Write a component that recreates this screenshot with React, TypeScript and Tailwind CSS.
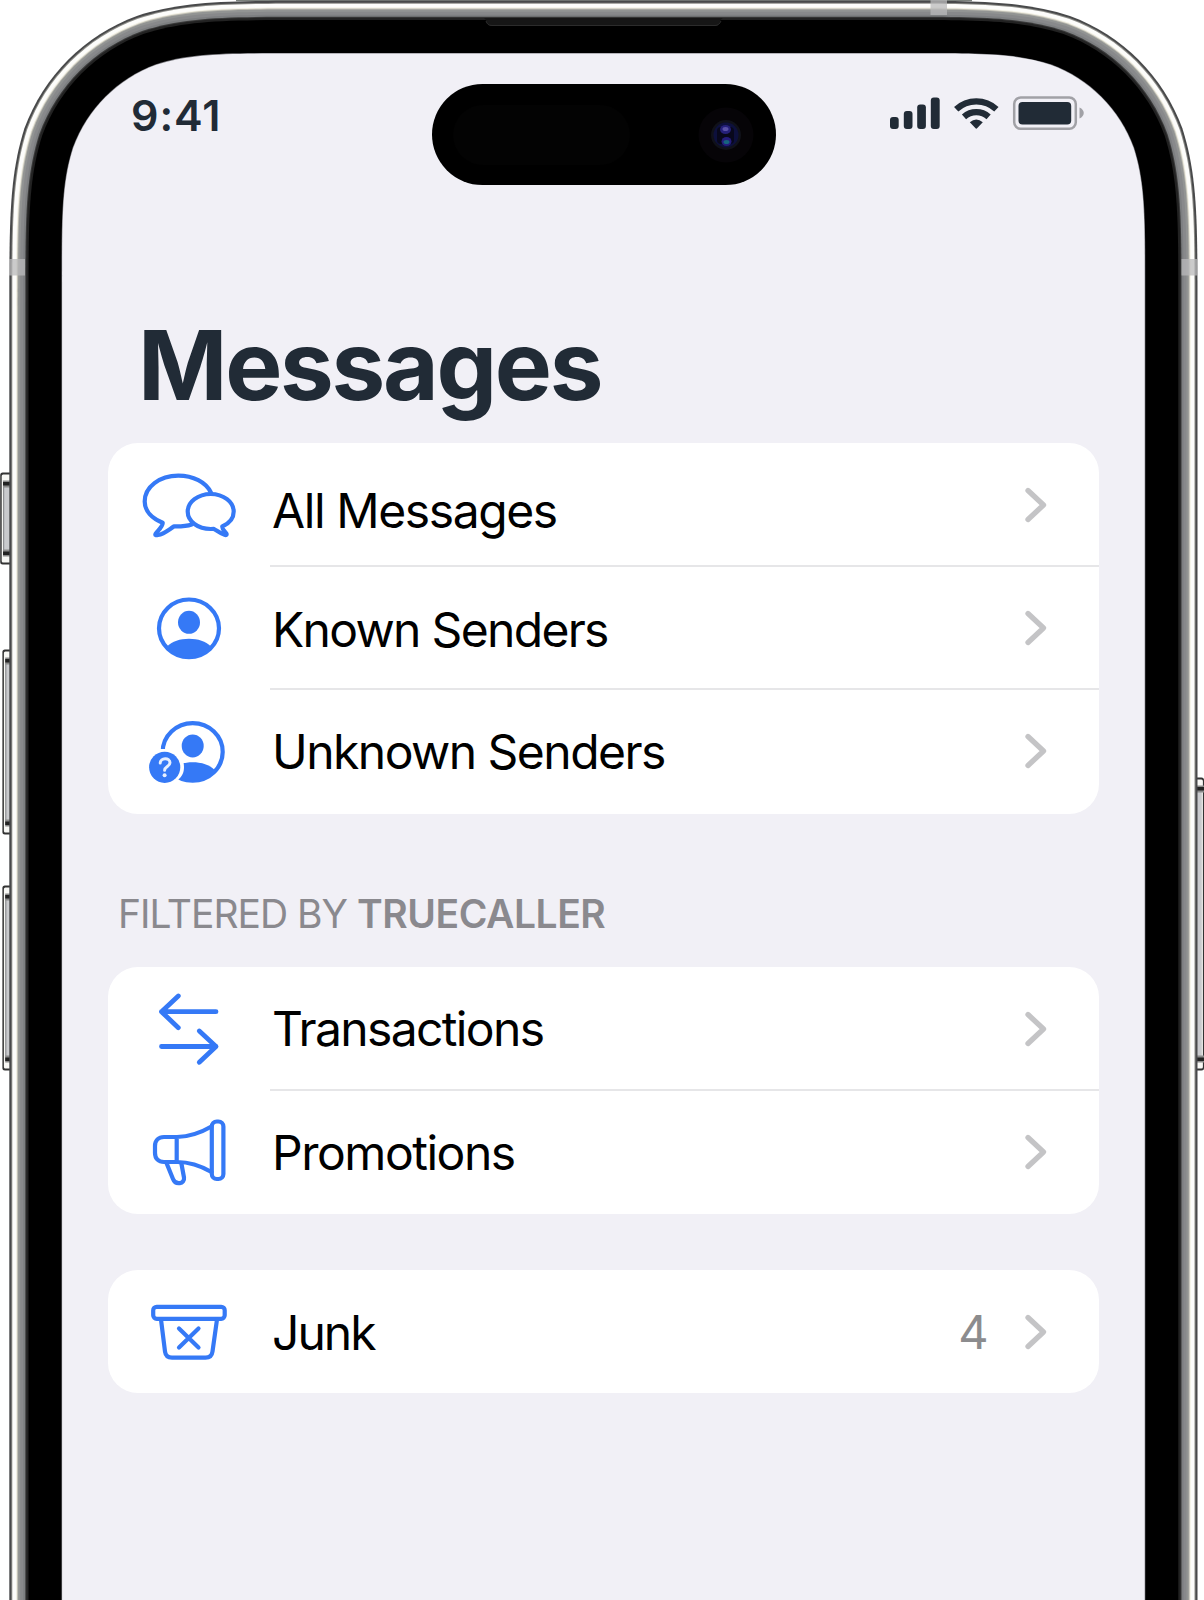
import type { ReactNode } from "react";

const BLUE = "#3579f6";

// Continuous-curvature rounded outline of the phone, inset by d from its outer edge.
function shellPath(d: number): string {
  const l = 9.3 + d;
  const t = 0.8 + d;
  const r = 1197.5 - d;
  const k = 202 - d;
  const a = 1.52866 * k;
  const b = 1.08849 * k;
  const c = 0.86841 * k;
  const e = 0.63149 * k;
  const f = 0.07491 * k;
  const g = 0.37282 * k;
  const h = 0.16906 * k;
  return [
    `M${l} 1620 V${t + a}`,
    `C${l} ${t + b} ${l} ${t + c} ${l + f} ${t + e}`,
    `C${l + h} ${t + g} ${l + g} ${t + h} ${l + e} ${t + f}`,
    `C${l + c} ${t} ${l + b} ${t} ${l + a} ${t}`,
    `H${r - a}`,
    `C${r - b} ${t} ${r - c} ${t} ${r - e} ${t + f}`,
    `C${r - g} ${t + h} ${r - h} ${t + g} ${r - f} ${t + e}`,
    `C${r} ${t + c} ${r} ${t + b} ${r} ${t + a}`,
    "V1620 Z",
  ].join(" ");
}

const SHELL_LAYERS: [number, string][] = [
  [0, "#48494a"],
  [2, "#8c8c88"],
  [3, "#fdfdfb"],
  [6.8, "#f1efe3"],
  [7.8, "#bdbcb2"],
  [8.8, "#929493"],
  [11, "#88898b"],
  [14, "#7d7f81"],
  [16, "#3a3a3a"],
  [17, "#222222"],
  [19.2, "#000000"],
  [52.2, "#77777c"],
  [52.8, "#f1f0f6"],
];

function SideButton({ x, y, w, h }: { x: number; y: number; w: number; h: number }) {
  return (
    <g>
      <rect x={x} y={y} width={w} height={h} rx={2.5} fill="#333" />
      <rect x={x + 1.5} y={y + 2} width={w - 2.6} height={h - 4} rx={1.5} fill="#f8f8f5" />
      <rect x={x + 2.8} y={y + 9} width={w - 5} height={h - 18} fill="#c9cacd" />
      <rect x={x + 2.8} y={y + 13} width={1.2} height={h - 26} fill="#8e8f92" />
      <rect x={x + 2.8} y={y + 8} width={w - 2.8} height={7} fill="#8a8a8a" />
      <rect x={x + 2.8} y={y + h - 15} width={w - 2.8} height={7} fill="#8a8a8a" />
      <rect x={x + 2.8} y={y + 9.5} width={w - 2.8} height={3.5} fill="#222" />
      <rect x={x + 2.8} y={y + h - 13} width={w - 2.8} height={3.5} fill="#222" />
    </g>
  );
}

function PhoneShell() {
  return (
    <svg className="absolute inset-0" width="1204" height="1600" viewBox="0 0 1204 1600">
      <SideButton x={0.2} y={472.5} w={13} h={92} />
      <SideButton x={2.4} y={649.5} w={11} h={185} />
      <SideButton x={2.4} y={885.5} w={11} h={185} />
      <SideButton x={1193} y={777.5} w={11} h={293} />
      <rect x="236" y="0" width="736" height="1.200" fill="#7b817c" />
      {SHELL_LAYERS.map(([d, fill]) => (
        <path key={d} d={shellPath(d)} fill={fill} />
      ))}
      <path d="M484 18 C487 19 486 26 492 26 H715 C721 26 719 19 723 18 Z" fill="#161616" />
      <path d="M486 21 C487 24 488.500 25.500 492 25.500 H715 C718 25.500 719.500 24 721 21" fill="none" stroke="#2c2c2c" strokeWidth="1" />
      <rect x="930.500" y="0" width="16.500" height="15" fill="#b9b9bb" opacity="0.75" />
      <rect x="9" y="259" width="16" height="16.500" fill="#b9b9bb" opacity="0.75" />
      <rect x="1181.500" y="259" width="16.500" height="16.500" fill="#b9b9bb" opacity="0.75" />
    </svg>
  );
}

function DynamicIsland() {
  return (
    <div className="mt-[84px] flex h-[101px] w-[344px] items-center justify-between rounded-full bg-black pr-[22px] pl-[21px]">
      <div className="h-[60px] w-[177px] rounded-full bg-[#030303]" />
      <svg width="56" height="56" viewBox="0 0 56 56">
        <circle cx="28" cy="28" r="27.500" fill="#060407" />
        <circle cx="28" cy="28" r="15" fill="#101119" />
        <circle cx="28" cy="28" r="12.500" fill="#0d103c" />
        <rect x="19" y="20" width="17" height="17" rx="4" fill="#08081c" />
        <ellipse cx="27.500" cy="22.500" rx="5.500" ry="4.500" fill="#25207a" />
        <ellipse cx="27.500" cy="22" rx="3" ry="2" fill="#5a52a8" />
        <ellipse cx="28.500" cy="34.500" rx="5" ry="4.500" fill="#241c7c" />
        <ellipse cx="28.500" cy="35" rx="3" ry="2" fill="#16647e" />
      </svg>
    </div>
  );
}

function StatusIcons() {
  return (
    <svg className="mt-[94px] ml-[112.500px]" width="200" height="40" viewBox="888 94 200 40">
      <g fill="#212b36">
        <rect x="890" y="117" width="8.700" height="12" rx="3" />
        <rect x="903.800" y="111" width="8.700" height="18" rx="3" />
        <rect x="917.200" y="104.500" width="8.700" height="24.500" rx="3" />
        <rect x="930.800" y="97.500" width="8.900" height="31.500" rx="3" />
        <rect x="1018.500" y="102" width="52.700" height="22.500" rx="4" />
        <path d="M969.800 122.300 Q976.300 116.700 982.800 122.300 L977.300 128 Q976.300 129.300 975.300 128 Z" />
      </g>
      <g fill="none" stroke="#212b36" strokeWidth="6.300">
        <path d="M956.200 109.200 A29.500 29.500 0 0 1 996.400 109.200" />
        <path d="M964 116.800 A18.500 18.500 0 0 1 988.600 116.800" />
      </g>
      <rect x="1014.200" y="97.500" width="61.600" height="31.300" rx="6.500" fill="none" stroke="#a1a1a6" strokeWidth="2.500" />
      <path d="M1079.500 107.500 C1085.200 110 1085.200 116 1079.500 118.500 Z" fill="#a1a1a6" />
    </svg>
  );
}

function IconBox({ children }: { children: ReactNode }) {
  return (
    <svg
      className="ml-[27.500px] shrink-0"
      width="110"
      height="123"
      viewBox="0 0 110 123"
      fill="none"
      stroke={BLUE}
      strokeWidth="4.200"
      strokeLinecap="round"
      strokeLinejoin="round"
    >
      {children}
    </svg>
  );
}

function BubblesIcon() {
  return (
    <IconBox>
      <path d="M75 49.700 C70 39 57 32.700 42.300 32.700 C23.500 32.700 8.700 44 8.700 58.500 C8.700 68 16 75.500 26.700 79.700 C27 83 22.500 87 19.800 90.500 C18.500 92.500 20 92.400 22 92 C28 91 33 86.500 38 83.400 C44 83.500 50 83.500 55.700 81.500" />
      <path d="M74.700 86 C62 86 51.700 78.500 51.700 68.500 C51.700 59 62 51 74.700 51 C87.500 51 97.700 59 97.700 68.500 C97.700 75.500 93 80.500 86.300 83.500 C85.800 86 89 88.500 90.300 90.500 C91.300 92 90 92.300 88.500 91.800 C84 90.500 81 87.500 77.700 85.900 Z" />
    </IconBox>
  );
}

function Person() {
  return (
    <>
      <ellipse cx="53" cy="62.300" rx="30" ry="28.800" />
      <ellipse cx="53" cy="56.300" rx="11" ry="11.500" fill={BLUE} stroke="none" />
      <path d="M31.500 80 C36 75.500 44 72.700 53 72.700 C62 72.700 70 75.500 74.500 80 C69 88 61 91.500 53 91.500 C45 91.500 37 88 31.500 80 Z" fill={BLUE} stroke="none" />
    </>
  );
}

function KnownIcon() {
  return (
    <IconBox>
      <Person />
    </IconBox>
  );
}

function UnknownIcon() {
  return (
    <IconBox>
      <g transform="translate(3.700 0.600)">
        <Person />
      </g>
      <path d="M10 60 H31 C42 61 48 69 48 78 C48 84 46 87 42 91 L40 96 H10 Z" fill="#fff" stroke="none" />
      <circle cx="28.700" cy="78.300" r="15.600" fill={BLUE} stroke="none" />
      <path d="M24.200 74 C24.200 68.500 34 68 34 73.800 C34 77.500 28.600 77.500 28.600 81.300" stroke="#e6efff" strokeWidth="3" />
      <circle cx="28.600" cy="86.300" r="2" fill="#e6efff" stroke="none" />
    </IconBox>
  );
}

function TransferIcon() {
  return (
    <IconBox>
      <path d="M80 44.700 H25.500 M42.300 29 L25.500 44.700 L42.300 60.700" strokeWidth="4.800" />
      <path d="M25.500 79.500 H80 M63.300 64 L80 79.500 L63.300 95.300" strokeWidth="4.800" />
    </IconBox>
  );
}

function MegaphoneIcon() {
  return (
    <IconBox>
      <rect x="75.800" y="31.500" width="11.600" height="57.500" rx="5" />
      <path d="M75.500 36.500 C66 42 54 46.700 41 47 H28 C22.500 47 19 50.500 19 56 V63 C19 68.500 22.500 72 28 72 H41 C54 72 66 76.500 75.500 82 M40.700 47 V72" />
      <path d="M30.500 73 L37 89 C39.500 95.500 49 94 48 87.500 L45.300 73" />
    </IconBox>
  );
}

function JunkIcon() {
  return (
    <IconBox>
      <rect x="17.200" y="36.800" width="71.500" height="12" rx="3.500" />
      <path d="M25 49.500 L29 81.500 C29.500 85.500 32 87.700 36 87.700 H69.500 C73.500 87.700 76 85.500 76.500 81.500 L81 49.500" />
      <path d="M43 58.500 L62.500 77.500 M62.500 58.500 L43 77.500" />
    </IconBox>
  );
}

type RowProps = {
  icon: ReactNode;
  label: string;
  labelClass: string;
  count?: string;
  divider?: boolean;
};

function Row({ icon, label, labelClass, count, divider }: RowProps) {
  return (
    <div className="flex h-[123px] text-[48px] leading-[123px] text-black">
      {icon}
      <div
        className={
          divider
            ? "ml-[24.500px] flex h-[124px] flex-1 border-b-2 border-[#e6e6e8]"
            : "ml-[24.500px] flex h-[123px] flex-1"
        }
      >
        <span className={`ml-[2px] h-[123px] flex-1 whitespace-nowrap ${labelClass}`}>{label}</span>
        {count && <span className="mr-[35.500px] h-[123px] text-[47px] text-[#8c8c8e]">{count}</span>}
        <svg className="mt-[42px] mr-[51px] shrink-0" width="24" height="40" viewBox="0 0 24 40">
          <path d="M4 5.500 L19.500 20 L4 34.500" fill="none" stroke="#c4c4c6" strokeWidth="5.300" strokeLinecap="round" strokeLinejoin="round" />
        </svg>
      </div>
    </div>
  );
}

function Card({ className, children }: { className: string; children: ReactNode }) {
  return <section className={`ml-[108px] w-[991px] rounded-[30px] bg-white ${className}`}>{children}</section>;
}

export default function App() {
  return (
    <main className="relative h-[1600px] w-[1204px] overflow-hidden bg-white font-['Inter',sans-serif]">
      <PhoneShell />
      <div className="relative flex flex-col">
        <header className="flex h-[200px]">
          <div className="mt-[94px] ml-[131px] w-[300.500px] text-[43px] leading-[43px] font-semibold tracking-[0.9px] text-[#212b36]">
            9:41
          </div>
          <DynamicIsland />
          <StatusIcons />
        </header>
        <h1 className="mt-[109px] ml-[138px] h-[134px] text-[96px] leading-[112px] font-bold tracking-[-2.300px] text-[#212b36]">
          Messages
        </h1>

        <Card className="h-[371px]">
          <Row icon={<BubblesIcon />} label="All Messages" labelClass="pt-[6px] tracking-[-1.400px]" divider />
          <Row icon={<KnownIcon />} label="Known Senders" labelClass="pt-[2px] tracking-[-1.680px]" divider />
          <Row icon={<UnknownIcon />} label="Unknown Senders" labelClass="pt-[1px] tracking-[-1.530px]" />
        </Card>

        <h2 className="mt-[73px] ml-[118px] h-[80px] text-[39px] leading-[54px] tracking-[-1px] text-[#8a898e]">
          FILTERED BY <b className="font-semibold tracking-[-0.450px]">TRUECALLER</b>
        </h2>

        <Card className="h-[247px]">
          <Row icon={<TransferIcon />} label="Transactions" labelClass="tracking-[-1.650px]" divider />
          <Row icon={<MegaphoneIcon />} label="Promotions" labelClass="pt-[1px] tracking-[-1.470px]" />
        </Card>

        <Card className="mt-[56px] h-[123px]">
          <Row icon={<JunkIcon />} label="Junk" labelClass="pt-[1px] tracking-[-2px]" count="4" />
        </Card>
      </div>
    </main>
  );
}
